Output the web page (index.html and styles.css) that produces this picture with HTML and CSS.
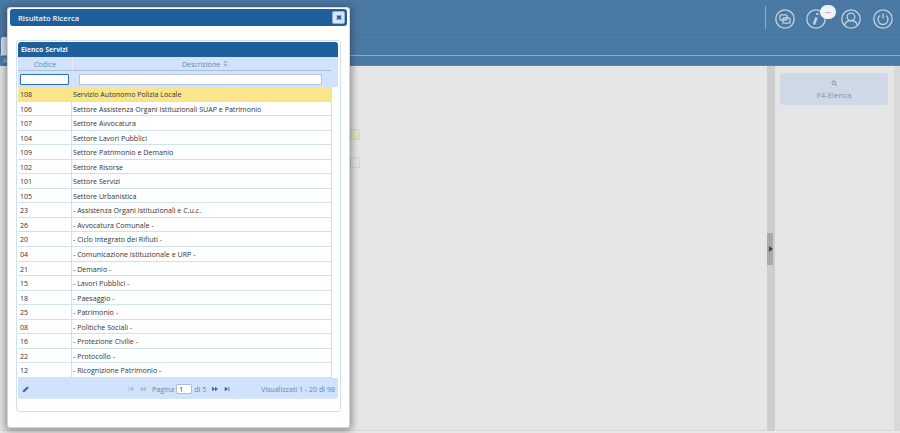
FILE: index.html
```html
<!DOCTYPE html>
<html lang="it">
<head>
<meta charset="utf-8">
<title>Risultato Ricerca</title>
<link rel="stylesheet" href="styles.css">
</head>
<body>
<div class="page">
  <header class="topbar">
    <div class="topbar-icons">
      <span class="divider"></span>
      <svg class="ico ico-a" viewBox="0 0 20 20"><circle cx="10" cy="10" r="9.2"/><rect x="5" y="5.800" width="7" height="5.200" rx="1"/><rect x="8" y="9" width="7" height="5.200" rx="1"/></svg>
      <span class="ico-wrap">
        <svg class="ico" viewBox="0 0 20 20"><circle cx="10" cy="10" r="9.2"/><path class="ico-i" d="M7.900 15.500 10.500 8.500M11.600 4.200l-.5 1.700"/></svg>
        <span class="badge">...</span>
      </span>
      <svg class="ico ico-c" viewBox="0 0 20 20"><circle cx="10" cy="10" r="9.2"/><circle cx="10" cy="8" r="3.800"/><path d="M3.700 16c1-3.300 3.400-4.500 6.300-4.500s5.300 1.200 6.300 4.500"/></svg>
      <svg class="ico ico-d" viewBox="0 0 20 20"><circle cx="10" cy="10" r="9.2"/><path d="M7 6.500a5 5 0 1 0 6 0M10 4.500v5"/></svg>
    </div>
    <div class="tab"></div>
    <div class="topbar-line"></div>
    <div class="crumb">A</div>
  </header>
  <main class="content">
    <section class="left-pane">
      <span class="field field-y"></span>
      <span class="field field-w"></span>
    </section>
    <div class="splitter"><span class="handle"></span></div>
    <aside class="right-pane">
      <div class="side-btn">
        <svg class="search" viewBox="0 0 10 10"><circle cx="4" cy="4" r="2.600"/><path d="M6 6l3 3"/></svg>
        <span>F4-Elenca</span>
      </div>
    </aside>
    <div class="edge"></div>
  </main>
</div>

<div class="modal">
  <div class="modal-title">
    <span>Risultato Ricerca</span>
    <span class="close">✖</span>
  </div>
  <div class="box">
    <div class="grid">
      <div class="grid-title">Elenco Servizi</div>
      <div class="col-head">
        <div class="c1">Codice</div>
        <div class="c2 c2-head">Descrizione <svg class="sort" viewBox="0 0 6 8"><path d="M3 0l2.500 3h-5zM3 8L.5 5h5z"/></svg></div>
      </div>
      <div class="filter">
        <div class="c1"><span class="inp inp-focus"></span></div>
        <div class="c2"><span class="inp inp-wide"></span></div>
      </div>
      <div class="rows">
        <div class="row sel"><div class="c1">108</div><div class="c2">Servizio Autonomo Polizia Locale</div></div>
        <div class="row"><div class="c1">106</div><div class="c2">Settore Assistenza Organi Istituzionali SUAP e Patrimonio</div></div>
        <div class="row"><div class="c1">107</div><div class="c2">Settore Avvocatura</div></div>
        <div class="row"><div class="c1">104</div><div class="c2">Settore Lavori Pubblici</div></div>
        <div class="row"><div class="c1">109</div><div class="c2">Settore Patrimonio e Demanio</div></div>
        <div class="row"><div class="c1">102</div><div class="c2">Settore Risorse</div></div>
        <div class="row"><div class="c1">101</div><div class="c2">Settore Servizi</div></div>
        <div class="row"><div class="c1">105</div><div class="c2">Settore Urbanistica</div></div>
        <div class="row"><div class="c1">23</div><div class="c2">- Assistenza Organi Istituzionali e C.u.c.</div></div>
        <div class="row"><div class="c1">26</div><div class="c2">- Avvocatura Comunale -</div></div>
        <div class="row"><div class="c1">20</div><div class="c2">- Ciclo Integrato dei Rifiuti -</div></div>
        <div class="row"><div class="c1">04</div><div class="c2">- Comunicazione Istituzionale e URP -</div></div>
        <div class="row"><div class="c1">21</div><div class="c2">- Demanio -</div></div>
        <div class="row"><div class="c1">15</div><div class="c2">- Lavori Pubblici -</div></div>
        <div class="row"><div class="c1">18</div><div class="c2">- Paesaggio -</div></div>
        <div class="row"><div class="c1">25</div><div class="c2">- Patrimonio -</div></div>
        <div class="row"><div class="c1">08</div><div class="c2">- Politiche Sociali -</div></div>
        <div class="row"><div class="c1">16</div><div class="c2">- Protezione Civilie -</div></div>
        <div class="row"><div class="c1">22</div><div class="c2">- Protocollo -</div></div>
        <div class="row"><div class="c1">12</div><div class="c2">- Ricognizione Patrimonio -</div></div>
      </div>
      <div class="pager">
        <svg class="pencil" viewBox="0 0 10 10"><path d="M1 9l.5-2.500L6.500 1.500l2 2-5 5z"/></svg>
        <div class="pager-nav">
          <svg class="nav dim" viewBox="0 0 8 8"><path d="M1 1h1v6H1zM7 1v6L2.500 4z"/></svg>
          <svg class="nav dim" viewBox="0 0 8 8"><path d="M4 1v6L0 4zM8 1v6L4 4z"/></svg>
          <span class="pg-label">Pagina</span>
          <span class="pg-input">1</span>
          <span class="pg-label">di 5</span>
          <svg class="nav" viewBox="0 0 8 8"><path d="M0 1v6l4-3zM4 1v6l4-3z"/></svg>
          <svg class="nav nav-last" viewBox="0 0 8 8"><path d="M1 1v6l4.500-3zM6 1h1v6H6z"/></svg>
        </div>
        <div class="pager-info">Visualizzati 1 - 20 di 98</div>
      </div>
    </div>
  </div>
</div>
</body>
</html>
```
FILE: styles.css
```css
* { box-sizing: border-box; }
html, body { margin: 0; height: 100%; overflow: hidden; }
body { font-family: "Open Sans", "Noto Sans", sans-serif; font-size: 8px; color: #333; background: #e8e8e8; }

.page { width: 900px; height: 433px; display: flex; flex-direction: column; }
.topbar { height: 66px; background: #4a79a4; position: relative; border-bottom: 1px solid #6c7f90; }
.topbar-icons { height: 35px; padding: 9px 7px 0 0; display: flex; justify-content: flex-end; align-items: flex-start; border-bottom: 1px solid #46739d; }
.divider { width: 1px; height: 23px; margin: -3px 9px 0 0; background: #8fabc6; }
.ico { width: 20px; height: 20px; fill: none; stroke: #c3d2e0; stroke-width: 1.300; display: block; }
.ico-a { margin-right: 11px; }
.ico-c { margin: 0 12px 0 15px; }
.ico-i { stroke-width: 2.400; }
.ico-wrap { position: relative; width: 20px; height: 20px; }
.badge { position: absolute; left: 14px; top: -4px; width: 16px; height: 14px; border-radius: 7px; background: #f1f3f5; color: #e33; font-size: 6px; line-height: 12px; font-weight: 700; letter-spacing: .3px; text-align: center; }
.tab { position: absolute; left: 1px; top: 37px; width: 7px; height: 18px; background: #d6e0ea; border-radius: 2px 0 0 0; }
.topbar-line { position: absolute; left: 0; right: 0; top: 55px; height: 1px; background: #8fabc6; }
.crumb { position: absolute; left: 3px; top: 56px; color: #bcd0e2; font-size: 7px; line-height: 9px; }

.content { flex: 1; display: flex; align-items: flex-start; }
.left-pane { width: 767px; height: 365px; background: #e6e6e6; border-radius: 0 0 3px 0; border-bottom: 1px solid #d5d5d5; position: relative; }
.field { position: absolute; left: 350px; width: 10px; height: 11px; border: 1px solid #d5d5cc; border-radius: 0 2px 2px 0; }
.field-y { top: 63px; background: #e4e2c8; }
.field-w { top: 91px; background: #e6e6e6; }
.splitter { width: 8px; height: 365px; background: #cdcdcd; position: relative; }
.handle { position: absolute; left: 0; top: 167px; width: 6px; height: 32px; background: #a9a9a9; }
.handle::after { content: ""; position: absolute; left: 2px; top: 13px; border-left: 4px solid #444; border-top: 3px solid transparent; border-bottom: 3px solid transparent; }
.right-pane { width: 119px; height: 365px; background: #e5e5e5; border-radius: 0 0 3px 3px; border-bottom: 1px solid #d5d5d5; padding: 7px 5px; }
.edge { flex: 1; height: 365px; background: #d9d9d9; }
.side-btn { width: 108px; height: 32px; border-radius: 3px; background: #cfd9e6; color: #7c93ad; font-size: 7.800px; line-height: 11px; display: flex; flex-direction: column; align-items: center; padding-top: 7px; gap: 3px; }
.search { width: 7px; height: 7px; fill: none; stroke: #6e8dac; stroke-width: 1.300; }

.modal { position: absolute; left: 7px; top: 7px; width: 343px; height: 421px; background: #fff; border: 1px solid #c9d9ea; border-radius: 3px; padding: 1px 2px; box-shadow: 0 1px 7px 2px rgba(40, 40, 40, .45); }
.modal-title { height: 17px; background: #1f5f9c; border-radius: 3px; color: #f2f6fa; font-size: 7.600px; font-weight: 600; display: flex; justify-content: space-between; align-items: center; padding: 0 2px 0 8px; }
.close { width: 13px; height: 13px; background: #d7e5f8; border: 1px solid #8fb1d6; border-radius: 2px; color: #1f5f9c; font-size: 7px; line-height: 11px; text-align: center; }
.box { margin: 14px 6px 0 6px; height: 372px; border: 1px solid #cfe0f0; border-radius: 3px; padding: 1px; }
.grid { width: 320px; }
.grid-title { height: 15px; background: #1f5f9c; border-radius: 3px 3px 0 0; color: #f2f6fa; font-size: 6.900px; font-weight: 700; line-height: 15px; padding-left: 3px; }
.col-head, .filter { display: flex; background: #d3e2fb; color: #5f88b5; padding-right: 7px; }
.col-head { height: 14px; font-size: 7.100px; line-height: 14px; text-align: center; }
.col-head .c1, .col-head .c2 { border-bottom: 1px solid #a7bfdc; }
.col-head .c2 { border-left: 1px solid #e3ecfb; }
.col-head .c2-head { padding-left: 6px; }
.sort { width: 5px; height: 7px; fill: #8fb0d8; margin-left: 1px; }
.filter { height: 16px; }
.c1 { width: 54px; flex: none; }
.c2 { flex: 1; min-width: 0; }
.inp { display: block; height: 11px; background: #fff; margin-top: 3px; }
.inp-focus { width: 49px; margin-left: 2px; border: 1.500px solid #2a6fb8; border-radius: 1px; }
.inp-wide { width: 243px; margin-left: 7px; border: 1px solid #b9c4d0; }
.rows { width: 314px; height: 291px; border-right: 1px solid #cfe0f0; }
.row { display: flex; height: 14.550px; border-bottom: 1px solid #cfe0f0; font-size: 7.100px; line-height: 15px; color: #333; }
.row .c1 { padding-left: 2px; width: 54px; border-right: 1px solid #cfe0f0; }
.row .c2 { padding-left: 1px; white-space: nowrap; }
.row.sel { background: #fbe58a; }
.pager { height: 21px; background: #d3e2fb; border-radius: 0 0 3px 3px; position: relative; display: flex; align-items: center; color: #5f88b5; font-size: 7.100px; padding: 0 3px 0 4px; }
.pencil { width: 8px; height: 8px; fill: #3b6ea5; flex: none; }
.pager-nav { position: absolute; left: 108px; top: 0; height: 21px; display: flex; align-items: center; gap: 2px; }
.nav { width: 6px; height: 6px; fill: #2f6aa5; margin: 0 2px; }
.nav.dim { fill: #9db8d6; }
.pg-label { margin: 0 2px; }
.pg-input { width: 16px; height: 10px; margin: 0 -2px; background: #fff; border: 1px solid #a7bfdc; border-radius: 1px; color: #333; font-size: 7px; line-height: 9px; padding-left: 2px; }
.pager-info { margin-left: auto; }
```
